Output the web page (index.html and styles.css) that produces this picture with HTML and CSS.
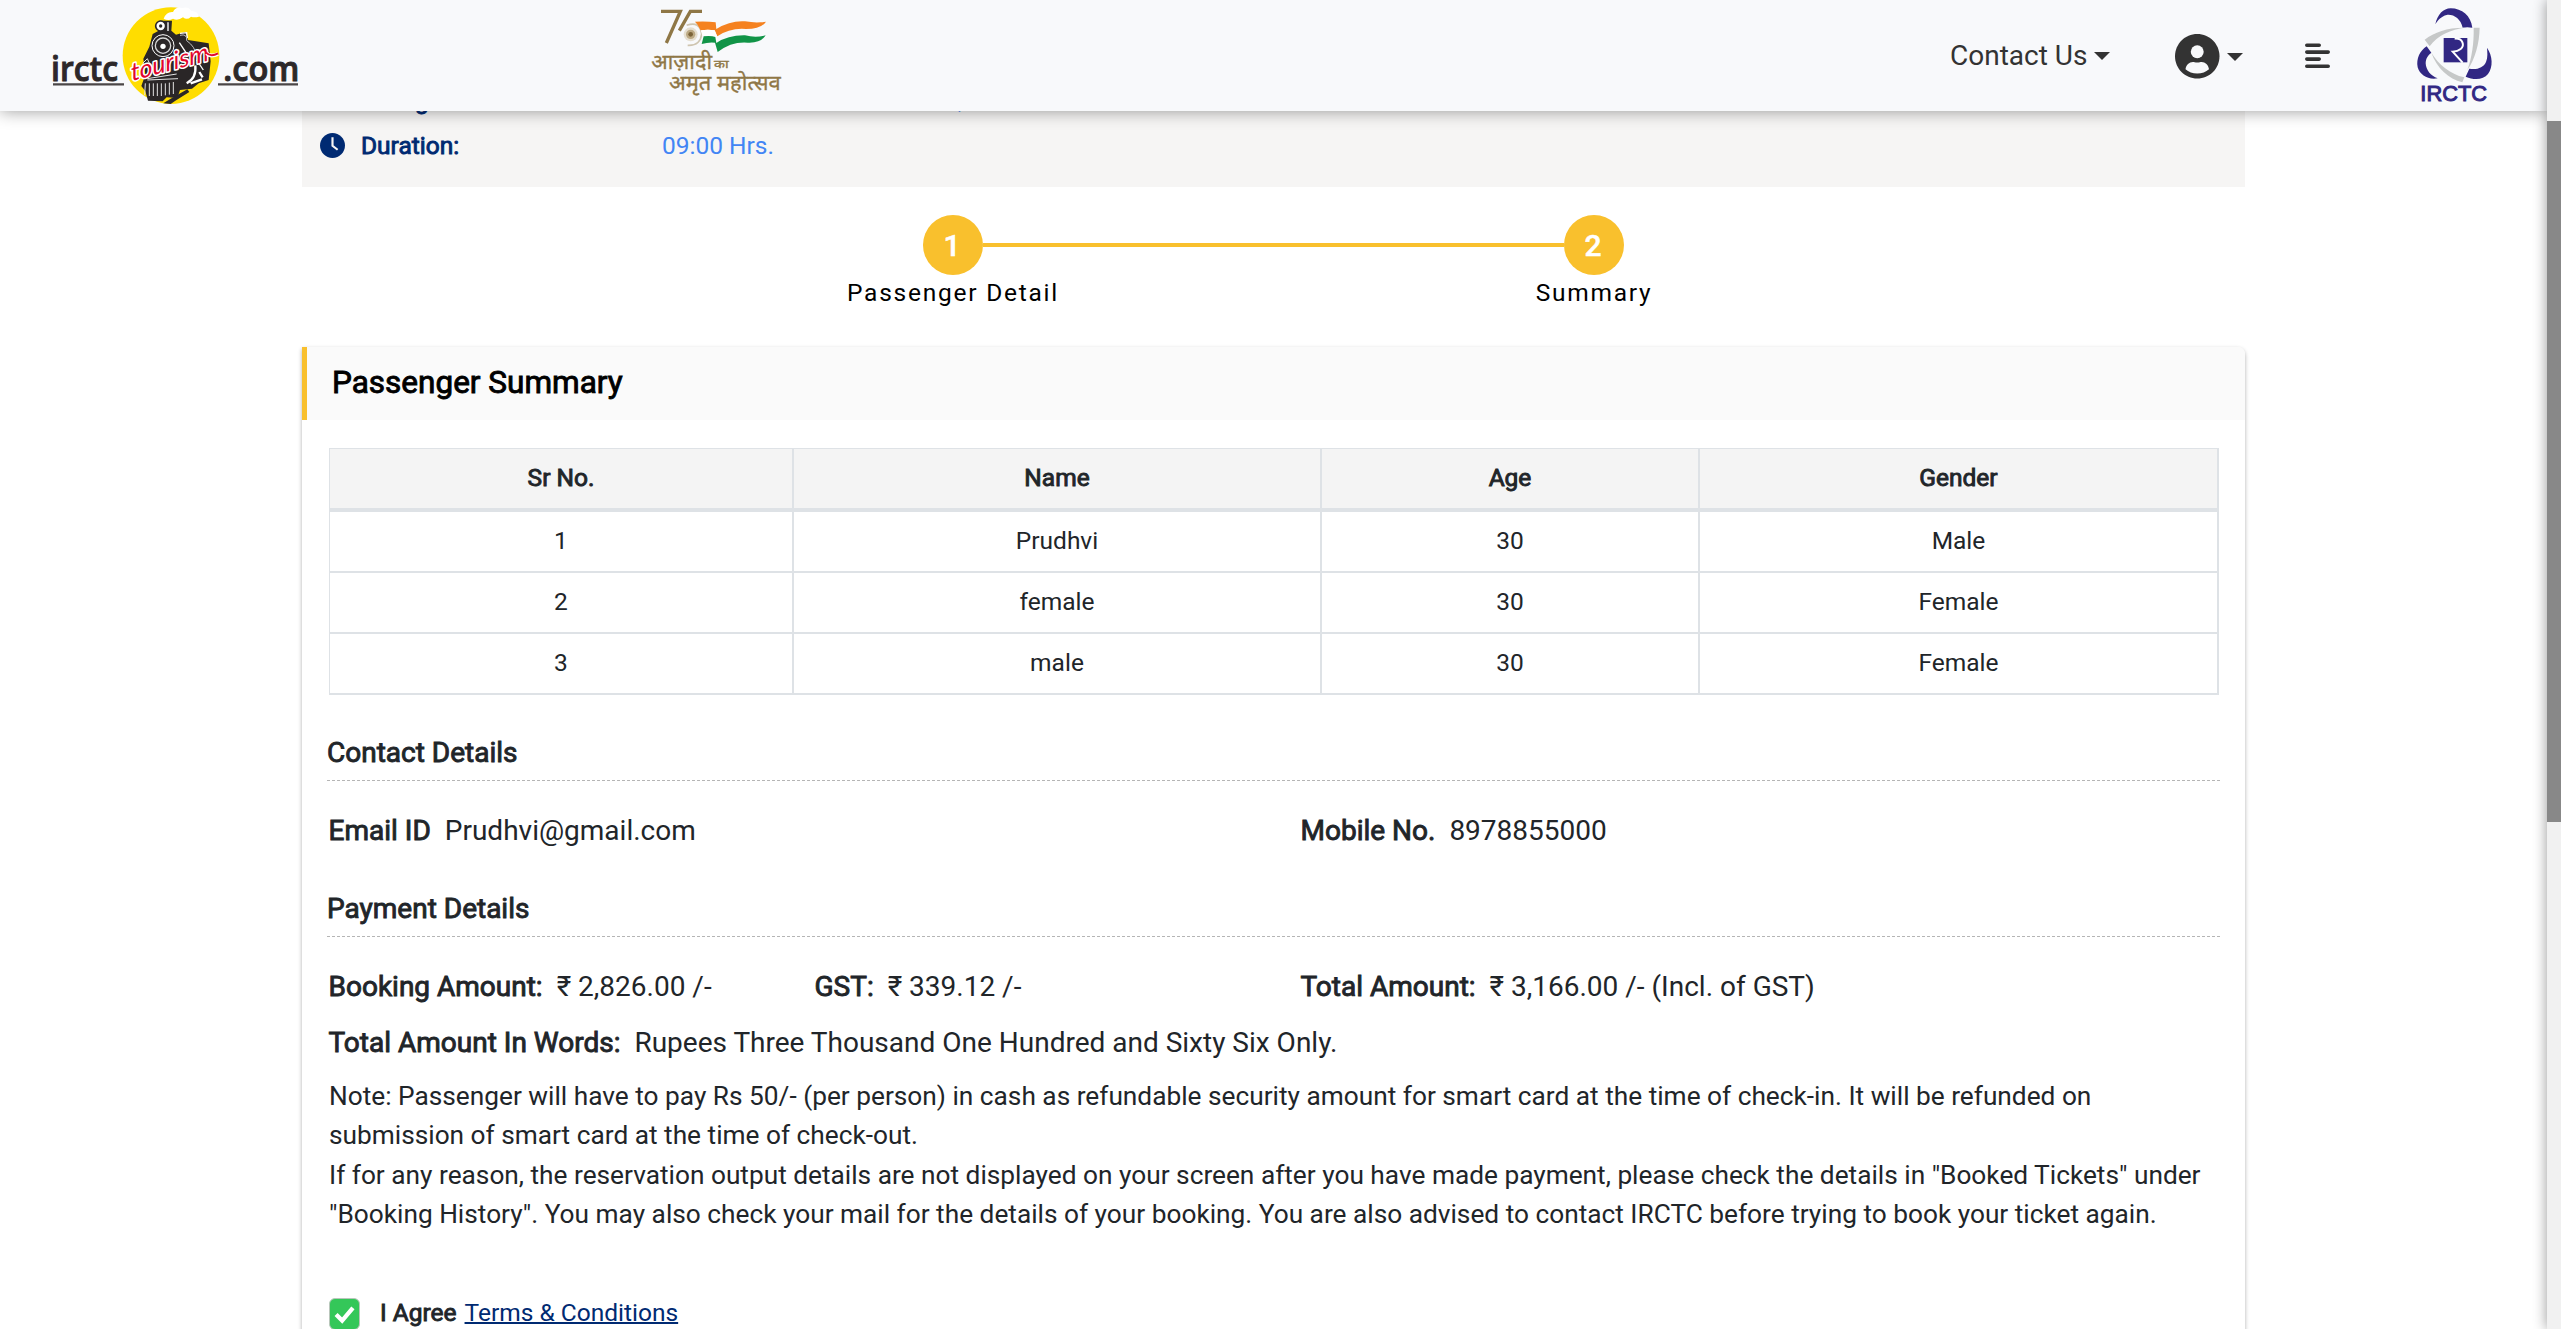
FILE: index.html
```
<!DOCTYPE html>
<html lang="en">
<head>
<meta charset="utf-8">
<title>IRCTC Tourism - Passenger Summary</title>
<link rel="stylesheet" href="styles.css">
</head>
<body>
<header class="topbar">
  <svg class="logo-tourism" viewBox="0 0 870 333" role="img" aria-label="irctc tourism.com">
    <g fill="#2d2829" stroke="#2d2829" stroke-width="3" font-family="Open Sans, sans-serif" font-weight="600" font-size="104">
      <text x="63" y="244" textLength="201" lengthAdjust="spacingAndGlyphs">irctc</text>
      <text x="580" y="244" textLength="228" lengthAdjust="spacingAndGlyphs">.com</text>
    </g>
    <path d="M69 253H282M564 253H804" stroke="#4a4647" stroke-width="7"/>
    <circle cx="423" cy="167" r="145" fill="#ffdd00"/>
    <path d="M401 56q8-22 28-20q8-18 28-12q18-6 26 8q22 2 24 18q-14 4-24 0q-12 12-24 2q-16 12-30 4q-14 8-28 0z" fill="#fff"/>
    <path d="M358 140l10-38 22-12-8-18 6-10 38 0-2 30 14 12 28-8 8 24 62 10 6 54-6 56-30 10-20 16-36 4-8 24-32-2-12 12-44-2-8-28-12-16 12-34-6-48z" fill="#2a2627"/>
    <ellipse cx="392" cy="78" rx="15" ry="15" fill="#fff" stroke="#2a2627" stroke-width="5"/>
    <circle cx="392" cy="78" r="5" fill="#2a2627"/>
    <path d="M414 67v26M450 100l20-2 2 16M448 128l20 30M500 180l20 30" stroke="#fff" stroke-width="4" fill="none"/>
    <path d="M450 106q22-6 20 16q26 18 28 44" stroke="#bdbdbd" stroke-width="3" fill="none"/>
    <circle cx="399" cy="137" r="33" fill="#2a2627" stroke="#fff" stroke-width="3"/>
    <circle cx="399" cy="137" r="23" fill="none" stroke="#d8d8d8" stroke-width="4"/>
    <circle cx="399" cy="139" r="8" fill="#fff"/>
    <path d="M338 190l14-14 8 18M352 236l88-14M346 250l-2 36M358 250v38M370 250v38M382 250v38M394 250v38M406 250v36M418 248v36M430 246v36M352 240l92-4" stroke="#e2e2e2" stroke-width="3" fill="none"/>
    <path d="M496 196q4 38-26 54M482 250l34-12M508 216l10 16" stroke="#fff" stroke-width="7" fill="none"/>
    <path d="M400 310l22-14 50-28 6 8-42 26-14 10z" fill="#2a2627"/>
    <text transform="translate(306 243) rotate(-15) skewX(-8)" font-family="Lato, sans-serif" font-style="italic" font-weight="400" font-size="74" textLength="240" lengthAdjust="spacingAndGlyphs" fill="#e2062c" stroke="#fff" stroke-width="9" paint-order="stroke" stroke-linejoin="round">tourism</text>
    <path d="M530 160q12 12 34 2" stroke="#fff" stroke-width="12" fill="none"/>
    <path d="M528 158q14 14 36 2" stroke="#e2062c" stroke-width="6" fill="none"/>
  </svg>
  <svg class="logo-azadi" viewBox="0 0 510 333" role="img" aria-label="आज़ादी का अमृत महोत्सव">
    <path d="M93 34H151L109 129M216 34H181L148 92" fill="none" stroke="#8f7746" stroke-width="10"/>
    <path d="M170 76q40-14 45 26q-4 36-42 34" fill="none" stroke="#cfc5b0" stroke-width="5"/>
    <circle cx="182" cy="103" r="21" fill="#e6dfd0"/>
    <circle cx="182" cy="103" r="14" fill="#bdaa84"/>
    <circle cx="182" cy="103" r="7" fill="#7b6338"/>
    <path d="M195 65q36-2 62 2l2 20q42-26 86-23q34 6 63 1q-14 22-60 22q-48-4-86 22l-8-18q-20-4-42 0q-8-18-17-26z" fill="#f58220"/>
    <path d="M212 91q22-4 42 0l8 20q-2 6-4 20q-10-24-40-22z" fill="#fff"/>
    <path d="M221 109q24-2 35 2l3 18q36-24 86-23q32 8 62 0q-14 24-54 22q-48-4-90 28l-8-28q-20-2-40 4z" fill="#119447"/>
    <g fill="#8f7746" stroke="#8f7746" stroke-width="1" font-family="Noto Sans, sans-serif">
      <text x="64" y="208" font-size="64" textLength="182" lengthAdjust="spacingAndGlyphs">आज़ादी</text>
      <text x="252" y="205" font-size="32" textLength="44" lengthAdjust="spacingAndGlyphs">का</text>
      <text x="117" y="271" font-size="64" textLength="335" lengthAdjust="spacingAndGlyphs">अमृत महोत्सव</text>
    </g>
  </svg>
  <nav class="nav">
    <a class="nav-contact">Contact Us<span class="caret"></span></a>
    <a class="nav-user">
      <svg class="user-icon" viewBox="0 0 496 496"><path fill="#333" d="M248 0C111 0 0 111 0 248s111 248 248 248 248-111 248-248S385 0 248 0z"/><circle cx="248" cy="198" r="72" fill="#f8f9fb"/><path fill="#f8f9fb" d="M117 392c6-48 42-80 82-80 14 0 24 6 49 6s35-6 49-6c40 0 76 32 82 80-34 30-80 48-131 48s-97-18-131-48z"/></svg>
      <span class="caret"></span>
    </a>
    <svg class="menu-icon" viewBox="0 0 25 26"><path d="M1.8 2.3H14.2M1.8 9.1H23.2M1.8 16.1H14.2M1.8 23.2H23.2" stroke="#333" stroke-width="3.6" stroke-linecap="round"/></svg>
  </nav>
  <svg class="logo-irctc" viewBox="0 0 330 333" role="img" aria-label="IRCTC">
    <g fill="#312783">
      <path d="M106 73C112 44 130 25 152 25C186 25 213 48 217 83Q201 80 188 83C182 56 160 42 140 45C124 49 114 60 106 73z"/>
      <path d="M80 139C60 152 48 176 53 202C60 226 84 240 113 235C92 228 78 210 77 190C77 176 84 165 94 158z"/>
      <path d="M261 143C278 168 280 200 264 222C250 240 222 241 197 230L208 206C230 210 250 204 258 186C264 172 262 156 261 143z"/>
      <path d="M131 114H202V187H131z"/>
    </g>
    <path d="M164 116C190 114 194 138 182 147C177 151 170 154 158 155L188 188" fill="none" stroke="#fff" stroke-width="6"/>
    <g fill="#c6c8c8">
      <path d="M74 119C104 96 144 82 196 83C154 88 112 106 89 139z"/>
      <path d="M221 83H239C238 130 226 176 202 210C216 172 222 128 221 83z"/>
      <path d="M94 158C116 194 150 222 193 232L187 247C146 236 110 204 94 158z"/>
    </g>
    <text x="61" y="303" font-family="Liberation Sans, sans-serif" font-size="66" fill="#312783" stroke="#312783" stroke-width="3" textLength="200" lengthAdjust="spacingAndGlyphs">IRCTC</text>
  </svg>
</header>

<div class="scrollbar"><div class="thumb"></div></div>

<main class="container">
  <section class="trip-info">
    <div class="info-row clipped"><span class="icon-cell"></span><span class="label bold">g</span><span class="value">,</span></div>
    <div class="info-row">
      <svg class="icon-cell" viewBox="0 0 512 512"><path fill="#002a72" d="M256 0C115 0 0 115 0 256s115 256 256 256 256-115 256-256S397 0 256 0z"/><path d="M256 110V262L344 330" fill="none" stroke="#f6f5f4" stroke-width="44" stroke-linecap="square"/></svg>
      <span class="label bold">Duration:</span><span class="value">09:00 Hrs.</span>
    </div>
  </section>

  <section class="stepper">
    <div class="step"><span class="dot">1</span><span class="step-name">Passenger Detail</span></div>
    <div class="step-line"></div>
    <div class="step"><span class="dot">2</span><span class="step-name">Summary</span></div>
  </section>

  <section class="card">
    <h2 class="card-title bold">Passenger Summary</h2>
    <div class="card-body">
      <table class="passengers">
        <colgroup><col class="c-sr"><col class="c-name"><col class="c-age"><col></colgroup>
        <thead><tr><th>Sr No.</th><th>Name</th><th>Age</th><th>Gender</th></tr></thead>
        <tbody>
          <tr><td>1</td><td>Prudhvi</td><td>30</td><td>Male</td></tr>
          <tr><td>2</td><td>female</td><td>30</td><td>Female</td></tr>
          <tr><td>3</td><td>male</td><td>30</td><td>Female</td></tr>
        </tbody>
      </table>

      <h3 class="section-title bold">Contact Details</h3>
      <div class="fields">
        <div class="half"><b>Email ID</b>Prudhvi@gmail.com</div>
        <div class="half"><b>Mobile No.</b>8978855000</div>
      </div>

      <h3 class="section-title payment bold">Payment Details</h3>
      <div class="fields">
        <div class="quarter"><b>Booking Amount:</b>₹ 2,826.00 /-</div>
        <div class="quarter"><b>GST:</b>₹ 339.12 /-</div>
        <div class="half"><b>Total Amount:</b>₹ 3,166.00 /- (Incl. of GST)</div>
      </div>
      <div class="fields words"><div><b>Total Amount In Words:</b>Rupees Three Thousand One Hundred and Sixty Six Only.</div></div>

      <p class="note">Note: Passenger will have to pay Rs 50/- (per person) in cash as refundable security amount for smart card at the time of check-in. It will be refunded on submission of smart card at the time of check-out.<br>If for any reason, the reservation output details are not displayed on your screen after you have made payment, please check the details in "Booked Tickets" under "Booking History". You may also check your mail for the details of your booking. You are also advised to contact IRCTC before trying to book your ticket again.</p>

      <div class="agree">
        <span class="checkbox"><svg viewBox="0 0 31 32"><path d="M6.5 16.5L13 23L24.5 9.5" fill="none" stroke="#fff" stroke-width="4.6"/></svg></span>
        <span class="bold">I Agree</span><a class="terms">Terms &amp; Conditions</a>
      </div>
    </div>
  </section>
</main>
</body>
</html>
```
FILE: styles.css
```
* { box-sizing: border-box; }
html, body { height: 100%; overflow: hidden; }
body {
  margin: 0;
  padding-right: 14px;
  background: #fff;
  color: #212529;
  font-family: Roboto, "Noto Sans", sans-serif;
  font-size: 28px;
  line-height: 42px;
}
h2, h3, p { margin: 0; font-weight: 400; font-size: inherit; }
.bold, b, th { font-weight: 400; -webkit-text-stroke: 0.9px currentColor; }

/* Top bar */
.topbar {
  position: relative;
  z-index: 2;
  display: flex;
  height: 111px;
  padding-left: 30px;
  background: #f8f9fb;
  box-shadow: 0 0 16px rgba(0, 0, 0, .4);
}
.topbar > svg { height: 111px; flex: none; }
.logo-tourism { width: 290px; }
.logo-azadi { width: 170px; margin-left: 310px; }
.nav {
  display: flex;
  align-items: center;
  width: 449px;
  margin-left: 1150px;
  color: #333;
}
.nav-contact { display: flex; align-items: center; width: 225px; height: 40px; padding-top: 1px; }
.caret {
  border: 8.4px solid transparent;
  border-top-color: currentColor;
  border-bottom: 0;
  margin-left: 7px;
}
.nav-user { display: flex; align-items: center; width: 130px; padding-top: 2px; }
.user-icon { width: 44.5px; height: 44.5px; }
.menu-icon { width: 25px; height: 26px; }
.logo-irctc { width: 110px; margin-left: 1px; }

/* Page scrollbar */
.scrollbar {
  position: fixed;
  z-index: 3;
  top: 0;
  right: 0;
  width: 14px;
  height: 100%;
  padding-top: 121px;
  background: #f1f1f1;
  box-shadow: 0 0 14px rgba(0, 0, 0, .42);
}
.thumb { height: 701px; background: #888; }

.container { width: 1943px; margin: 0 auto; }

/* Trip info */
.trip-info {
  height: 76px;
  padding: 16px 18px 0;
  background: #f6f5f4;
  font-size: 24.5px;
  line-height: 37px;
}
.info-row { display: flex; align-items: center; height: 37px; color: #002a72; }
.info-row.clipped { margin: -45px 0 8px; }
.clipped .label { padding-left: 54px; }
.clipped .value { padding-left: 296px; }
.icon-cell { width: 25px; height: 25px; flex: none; }
.label { width: 301px; margin-left: 16px; flex: none; }
.value { color: #4285f4; }

/* Stepper */
.stepper {
  display: flex;
  justify-content: center;
  padding-top: 28px;
  height: 160px;
}
.step { display: flex; flex-direction: column; align-items: center; width: 60px; }
.dot {
  width: 60px;
  height: 60px;
  padding-right: 2px;
  border-radius: 50%;
  background: #f9c02d;
  color: #fff;
  font-weight: 500;
  font-size: 30px;
  line-height: 62px;
  text-align: center;
  -webkit-text-stroke: 0.5px #fff;
}
.step-name {
  color: #000;
  font-size: 24.5px;
  line-height: 35px;
  letter-spacing: 1.75px;
  white-space: nowrap;
}
.step-line { width: 581px; height: 4px; margin-top: 28px; background: #f9c02d; }

/* Card */
.card {
  height: 1000px;
  border-radius: 0 7px 0 0;
  box-shadow: 0 2px 4px rgba(0, 0, 0, .32);
}
.card-title {
  height: 73px;
  padding-left: 25px;
  border-left: 5px solid #f9c02d;
  border-radius: 0 7px 0 0;
  background: #fafafa;
  color: #000;
  font-size: 31.5px;
  line-height: 71px;
}
.card-body { padding: 28px 25px 0; }

.passengers {
  width: 1890px;
  margin-left: 2px;
  table-layout: fixed;
  border-spacing: 0;
  border: 1px solid #dee2e6;
  border-width: 1px 0 0 1px;
  font-size: 24.5px;
  line-height: 36px;
  text-align: center;
}
.c-sr { width: 464px; }
.c-name { width: 528px; }
.c-age { width: 378px; }
.passengers th, .passengers td {
  height: 61px;
  padding: 0 0 1px;
  border: 0 solid #dee2e6;
  border-width: 0 2px 2px 0;
}
.passengers th { height: 63px; border-bottom-width: 4px; background: #f4f4f4; }

.section-title {
  height: 49px;
  margin-top: 37px;
  border-bottom: 1px dashed #b5b5b5;
}
.section-title.payment { margin-top: 36px; }
.fields { display: flex; padding: 29px 0 0 1.5px; }
.fields > div { flex: none; }
.half { width: 972px; }
.quarter { width: 486px; }
b { margin-right: 14px; }
.words { padding-top: 14px; }
.note {
  padding: 13px 10px 0 2px;
  font-size: 26.25px;
  line-height: 39.375px;
}
.agree {
  display: flex;
  align-items: center;
  margin-top: 59px;
  padding-left: 2px;
  font-size: 24.5px;
  line-height: 37px;
}
.checkbox {
  width: 31px;
  height: 32px;
  margin: 3px 20px 0 0;
  border: 1px solid #b9c6bb;
  border-radius: 6px;
  background: #34c759;
}
.checkbox svg { display: block; width: 29px; height: 30px; }
.terms {
  margin-left: 8px;
  color: #002a72;
  text-decoration: underline;
  text-decoration-thickness: 2px;
}
```
